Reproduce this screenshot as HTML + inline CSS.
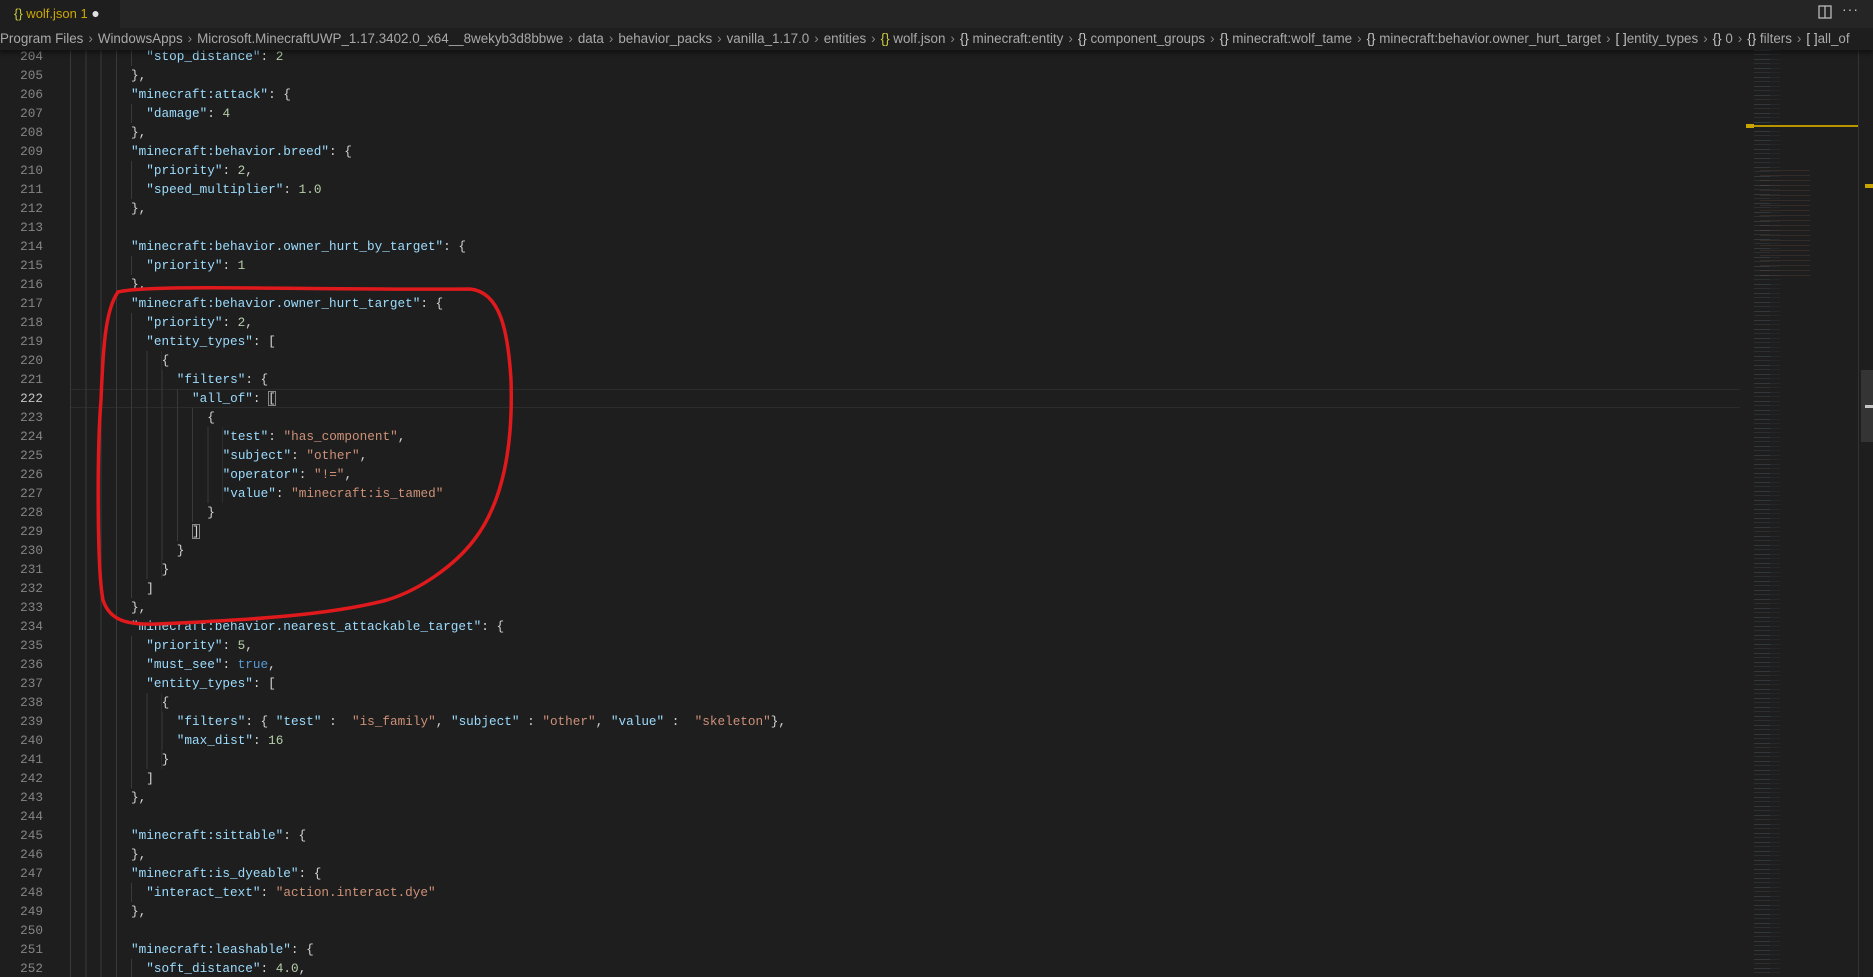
<!DOCTYPE html>
<html><head><meta charset="utf-8">
<style>
*{margin:0;padding:0;box-sizing:border-box}
html,body{width:1873px;height:977px;overflow:hidden;background:#1e1e1e}
body{position:relative;font-family:"Liberation Sans",sans-serif}
#tabs{position:absolute;left:0;top:0;width:1873px;height:28px;background:#252526}
#tab{position:absolute;left:0;top:0;width:120px;height:28px;background:#1e1e1e;color:#cca700;font-size:13px;line-height:26px;padding-left:14px;white-space:nowrap}
#crumb{position:absolute;left:0;top:28px;width:1873px;height:22px;background:#1e1e1e;color:#a9a9a9;font-size:13.4px;line-height:22px;white-space:nowrap;overflow:hidden;z-index:3;box-shadow:0 3px 4px rgba(0,0,0,.45);clip-path:inset(0 0 -8px 0)}
#crumb .sep{color:#8a8a8a;padding:0 5px}
#crumb .ic{color:#c6c6c6}
#ed{position:absolute;left:0;top:47px;width:1740px;height:930px;overflow:hidden}
.l{position:absolute;left:0;height:19px;width:1740px;font-family:"Liberation Mono",monospace;font-size:12.7px;line-height:19px;color:#d4d4d4;white-space:pre}
.ln{position:absolute;left:0;width:43px;text-align:right;color:#858585}
.cd{position:absolute;left:70px}
.g{display:inline-block;height:19px;vertical-align:top;background:repeating-linear-gradient(to right,#3a3a3a 0 1px,transparent 1px 15.26px)}
.k{color:#9cdcfe}.s{color:#ce9178}.n{color:#b5cea8}.b{color:#569cd6}
.cur{border-top:1px solid #2c2c2c;border-bottom:1px solid #2c2c2c}
.bm{outline:1px solid #888;outline-offset:-1px}
#mm{position:absolute;left:1746px;top:50px;width:112px;height:927px;overflow:hidden}
#sb{position:absolute;left:1858px;top:50px;width:15px;height:927px;border-left:1px solid #333}
</style></head><body>
<div id="tabs">
 <div id="tab"><b style="font-weight:normal;color:#cbcb41">{}</b> wolf.json 1 <span style="color:#e0e0e0;font-size:14px">&#9679;</span></div>
 <svg style="position:absolute;left:1818px;top:5px" width="14" height="14" viewBox="0 0 14 14"><rect x="1" y="1" width="12" height="12" fill="none" stroke="#c5c5c5" stroke-width="1.2"/><line x1="7" y1="1" x2="7" y2="13" stroke="#c5c5c5" stroke-width="1.2"/></svg>
 <div style="position:absolute;left:1842px;top:1px;color:#c5c5c5;font-size:14px;letter-spacing:1px">···</div>
</div>
<div id="crumb">Program Files<span class="sep">&#8250;</span>WindowsApps<span class="sep">&#8250;</span>Microsoft.MinecraftUWP_1.17.3402.0_x64__8wekyb3d8bbwe<span class="sep">&#8250;</span>data<span class="sep">&#8250;</span>behavior_packs<span class="sep">&#8250;</span>vanilla_1.17.0<span class="sep">&#8250;</span>entities<span class="sep">&#8250;</span><span style="color:#cbcb41">{}</span> wolf.json<span class="sep">&#8250;</span><span class="ic">{}</span> minecraft:entity<span class="sep">&#8250;</span><span class="ic">{}</span> component_groups<span class="sep">&#8250;</span><span class="ic">{}</span> minecraft:wolf_tame<span class="sep">&#8250;</span><span class="ic">{}</span> minecraft:behavior.owner_hurt_target<span class="sep">&#8250;</span><span class="ic">[ ]</span>entity_types<span class="sep">&#8250;</span><span class="ic">{}</span> 0<span class="sep">&#8250;</span><span class="ic">{}</span> filters<span class="sep">&#8250;</span><span class="ic">[ ]</span>all_of</div>

<div id="ed">
<div class="l" style="top:0"><span class="ln">204</span><span class="cd"><span class="g" style="width:76.3px"></span><span class="k">"stop_distance"</span>: <span class="n">2</span></span></div>
<div class="l" style="top:19px"><span class="ln">205</span><span class="cd"><span class="g" style="width:61px"></span>},</span></div>
<div class="l" style="top:38px"><span class="ln">206</span><span class="cd"><span class="g" style="width:61px"></span><span class="k">"minecraft:attack"</span>: {</span></div>
<div class="l" style="top:57px"><span class="ln">207</span><span class="cd"><span class="g" style="width:76.3px"></span><span class="k">"damage"</span>: <span class="n">4</span></span></div>
<div class="l" style="top:76px"><span class="ln">208</span><span class="cd"><span class="g" style="width:61px"></span>},</span></div>
<div class="l" style="top:95px"><span class="ln">209</span><span class="cd"><span class="g" style="width:61px"></span><span class="k">"minecraft:behavior.breed"</span>: {</span></div>
<div class="l" style="top:114px"><span class="ln">210</span><span class="cd"><span class="g" style="width:76.3px"></span><span class="k">"priority"</span>: <span class="n">2</span>,</span></div>
<div class="l" style="top:133px"><span class="ln">211</span><span class="cd"><span class="g" style="width:76.3px"></span><span class="k">"speed_multiplier"</span>: <span class="n">1.0</span></span></div>
<div class="l" style="top:152px"><span class="ln">212</span><span class="cd"><span class="g" style="width:61px"></span>},</span></div>
<div class="l" style="top:171px"><span class="ln">213</span><span class="cd"><span class="g" style="width:61px"></span></span></div>
<div class="l" style="top:190px"><span class="ln">214</span><span class="cd"><span class="g" style="width:61px"></span><span class="k">"minecraft:behavior.owner_hurt_by_target"</span>: {</span></div>
<div class="l" style="top:209px"><span class="ln">215</span><span class="cd"><span class="g" style="width:76.3px"></span><span class="k">"priority"</span>: <span class="n">1</span></span></div>
<div class="l" style="top:228px"><span class="ln">216</span><span class="cd"><span class="g" style="width:61px"></span>},</span></div>
<div class="l" style="top:247px"><span class="ln">217</span><span class="cd"><span class="g" style="width:61px"></span><span class="k">"minecraft:behavior.owner_hurt_target"</span>: {</span></div>
<div class="l" style="top:266px"><span class="ln">218</span><span class="cd"><span class="g" style="width:76.3px"></span><span class="k">"priority"</span>: <span class="n">2</span>,</span></div>
<div class="l" style="top:285px"><span class="ln">219</span><span class="cd"><span class="g" style="width:76.3px"></span><span class="k">"entity_types"</span>: [</span></div>
<div class="l" style="top:304px"><span class="ln">220</span><span class="cd"><span class="g" style="width:91.6px"></span>{</span></div>
<div class="l" style="top:323px"><span class="ln">221</span><span class="cd"><span class="g" style="width:106.8px"></span><span class="k">"filters"</span>: {</span></div>
<div class="l cur" style="top:342px;left:70px;width:1670px"></div>
<div class="l" style="top:342px"><span class="ln" style="color:#c6c6c6">222</span><span class="cd"><span class="g" style="width:122px"></span><span class="k">"all_of"</span>: <span class="bm">[</span></span></div>
<div class="l" style="top:361px"><span class="ln">223</span><span class="cd"><span class="g" style="width:137.3px"></span>{</span></div>
<div class="l" style="top:380px"><span class="ln">224</span><span class="cd"><span class="g" style="width:152.6px"></span><span class="k">"test"</span>: <span class="s">"has_component"</span>,</span></div>
<div class="l" style="top:399px"><span class="ln">225</span><span class="cd"><span class="g" style="width:152.6px"></span><span class="k">"subject"</span>: <span class="s">"other"</span>,</span></div>
<div class="l" style="top:418px"><span class="ln">226</span><span class="cd"><span class="g" style="width:152.6px"></span><span class="k">"operator"</span>: <span class="s">"!="</span>,</span></div>
<div class="l" style="top:437px"><span class="ln">227</span><span class="cd"><span class="g" style="width:152.6px"></span><span class="k">"value"</span>: <span class="s">"minecraft:is_tamed"</span></span></div>
<div class="l" style="top:456px"><span class="ln">228</span><span class="cd"><span class="g" style="width:137.3px"></span>}</span></div>
<div class="l" style="top:475px"><span class="ln">229</span><span class="cd"><span class="g" style="width:122px"></span><span class="bm">]</span></span></div>
<div class="l" style="top:494px"><span class="ln">230</span><span class="cd"><span class="g" style="width:106.8px"></span>}</span></div>
<div class="l" style="top:513px"><span class="ln">231</span><span class="cd"><span class="g" style="width:91.6px"></span>}</span></div>
<div class="l" style="top:532px"><span class="ln">232</span><span class="cd"><span class="g" style="width:76.3px"></span>]</span></div>
<div class="l" style="top:551px"><span class="ln">233</span><span class="cd"><span class="g" style="width:61px"></span>},</span></div>
<div class="l" style="top:570px"><span class="ln">234</span><span class="cd"><span class="g" style="width:61px"></span><span class="k">"minecraft:behavior.nearest_attackable_target"</span>: {</span></div>
<div class="l" style="top:589px"><span class="ln">235</span><span class="cd"><span class="g" style="width:76.3px"></span><span class="k">"priority"</span>: <span class="n">5</span>,</span></div>
<div class="l" style="top:608px"><span class="ln">236</span><span class="cd"><span class="g" style="width:76.3px"></span><span class="k">"must_see"</span>: <span class="b">true</span>,</span></div>
<div class="l" style="top:627px"><span class="ln">237</span><span class="cd"><span class="g" style="width:76.3px"></span><span class="k">"entity_types"</span>: [</span></div>
<div class="l" style="top:646px"><span class="ln">238</span><span class="cd"><span class="g" style="width:91.6px"></span>{</span></div>
<div class="l" style="top:665px"><span class="ln">239</span><span class="cd"><span class="g" style="width:106.8px"></span><span class="k">"filters"</span>: { <span class="k">"test"</span> :  <span class="s">"is_family"</span>, <span class="k">"subject"</span> : <span class="s">"other"</span>, <span class="k">"value"</span> :  <span class="s">"skeleton"</span>},</span></div>
<div class="l" style="top:684px"><span class="ln">240</span><span class="cd"><span class="g" style="width:106.8px"></span><span class="k">"max_dist"</span>: <span class="n">16</span></span></div>
<div class="l" style="top:703px"><span class="ln">241</span><span class="cd"><span class="g" style="width:91.6px"></span>}</span></div>
<div class="l" style="top:722px"><span class="ln">242</span><span class="cd"><span class="g" style="width:76.3px"></span>]</span></div>
<div class="l" style="top:741px"><span class="ln">243</span><span class="cd"><span class="g" style="width:61px"></span>},</span></div>
<div class="l" style="top:760px"><span class="ln">244</span><span class="cd"><span class="g" style="width:61px"></span></span></div>
<div class="l" style="top:779px"><span class="ln">245</span><span class="cd"><span class="g" style="width:61px"></span><span class="k">"minecraft:sittable"</span>: {</span></div>
<div class="l" style="top:798px"><span class="ln">246</span><span class="cd"><span class="g" style="width:61px"></span>},</span></div>
<div class="l" style="top:817px"><span class="ln">247</span><span class="cd"><span class="g" style="width:61px"></span><span class="k">"minecraft:is_dyeable"</span>: {</span></div>
<div class="l" style="top:836px"><span class="ln">248</span><span class="cd"><span class="g" style="width:76.3px"></span><span class="k">"interact_text"</span>: <span class="s">"action.interact.dye"</span></span></div>
<div class="l" style="top:855px"><span class="ln">249</span><span class="cd"><span class="g" style="width:61px"></span>},</span></div>
<div class="l" style="top:874px"><span class="ln">250</span><span class="cd"><span class="g" style="width:61px"></span></span></div>
<div class="l" style="top:893px"><span class="ln">251</span><span class="cd"><span class="g" style="width:61px"></span><span class="k">"minecraft:leashable"</span>: {</span></div>
<div class="l" style="top:912px"><span class="ln">252</span><span class="cd"><span class="g" style="width:76.3px"></span><span class="k">"soft_distance"</span>: <span class="n">4.0</span>,</span></div>
</div>

<div id="mm">
 <div style="position:absolute;left:8px;top:0;width:40px;height:927px;background:repeating-linear-gradient(to bottom,rgba(120,150,170,.22) 0 1px,transparent 1px 4px,rgba(120,150,170,.15) 4px 5px,transparent 5px 9px);-webkit-mask:repeating-linear-gradient(to right,#000 0 16px,rgba(0,0,0,.4) 16px 26px,transparent 26px 40px)"></div>
 <div style="position:absolute;left:14px;top:120px;width:50px;height:110px;background:repeating-linear-gradient(to bottom,rgba(170,120,100,.15) 0 1px,transparent 1px 5px)"></div>
 <div style="position:absolute;left:0;top:75px;width:112px;height:2px;background:#b89500"></div>
 <div style="position:absolute;left:0;top:74px;width:8px;height:4px;background:#c9a400"></div>
</div>
<div id="sb">
 <div style="position:absolute;left:2px;top:320px;width:12px;height:72px;background:rgba(121,121,121,.25)"></div>
 <div style="position:absolute;left:6px;top:134px;width:8px;height:4px;background:#c9a400"></div>
 <div style="position:absolute;left:6px;top:355px;width:8px;height:3px;background:#c5c5c5"></div>
</div>

<svg style="position:absolute;left:0;top:0;z-index:5" width="1873" height="977">
 <path d="M118 292 C150 284,300 290,470 289 C500 292,508 330,511 380 C513 440,505 500,474 540 C455 565,420 590,387 600 C330 615,250 620,157 624 C130 625,110 622,103 600 C97 570,97 450,101 400 C103 350,105 310,118 292" fill="none" stroke="#e0191c" stroke-width="3.5" stroke-linecap="round"/>
</svg>
</body></html>
